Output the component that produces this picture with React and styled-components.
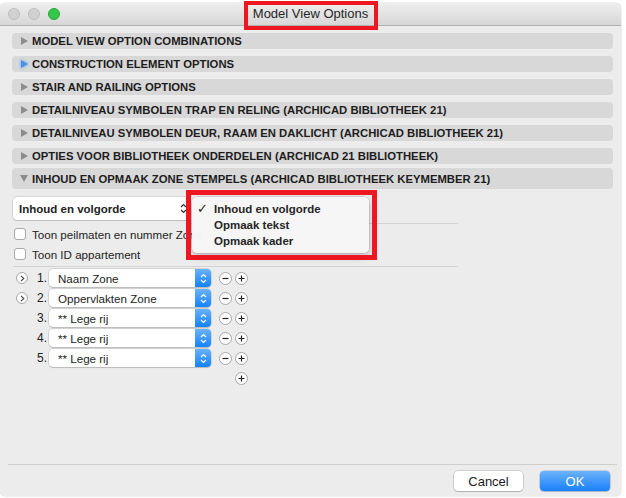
import React from 'react'
import styled, { createGlobalStyle } from 'styled-components'

const GlobalStyle = createGlobalStyle`
  html, body {
    margin: 0;
    padding: 0;
    background: #ffffff;
  }
  body {
    font-family: "Liberation Sans", Arial, sans-serif;
    color: #222;
  }
`

const Page = styled.div`
  width: 626px;
  height: 498px;
  padding-top: 3px;
  box-sizing: border-box;
`

const Window = styled.div`
  width: 621px;
  height: 493px;
  background: #ececec;
  border-radius: 5px;
  display: flex;
  flex-direction: column;
  box-shadow: 0 0 0 0.5px rgba(0, 0, 0, 0.12);
`

const TitleBar = styled.header`
  position: relative;
  flex: none;
  height: 23px;
  box-sizing: border-box;
  display: grid;
  grid-template-columns: 1fr auto 1fr;
  align-items: center;
  padding: 0 8px;
  background: linear-gradient(#eeeeee, #d7d7d7);
  border-bottom: 1px solid #b0b0b0;
  border-radius: 5px 5px 0 0;
`

const Lights = styled.div`
  display: flex;
  gap: 8px;
`

const Light = styled.span`
  width: 12px;
  height: 12px;
  box-sizing: border-box;
  border-radius: 50%;
  background: ${(p) => (p.green ? '#34c84a' : '#d1d1d1')};
  border: 0.5px solid ${(p) => (p.green ? '#27a438' : '#bcbcbc')};
`

const Title = styled.div`
  position: relative;
  font-size: 13px;
  line-height: 16px;
  color: #262626;
`

const Highlight = styled.div`
  position: absolute;
  box-sizing: border-box;
  border: ${(p) => p.weight || 4}px solid #ee1620;
  pointer-events: none;
`

const TitleHighlight = styled(Highlight)`
  left: -9px;
  right: -10px;
  top: -5px;
  bottom: -8px;
`

const Body = styled.main`
  flex: 1;
  display: flex;
  flex-direction: column;
  padding: 7px 8px 0 12px;
`

const Sections = styled.div`
  display: flex;
  flex-direction: column;
  gap: 7px;
`

const SectionHeader = styled.div`
  height: ${(p) => (p.open ? 21 : 16)}px;
  margin-top: ${(p) => (p.open ? -3 : 0)}px;
  width: 601px;
  display: flex;
  align-items: center;
  padding-left: 8px;
  box-sizing: border-box;
  background: #d8d8d8;
  border-radius: 4px;
  font-size: 11.3px;
  font-weight: bold;
  color: #1d1d1d;
  white-space: nowrap;
`

const Arrow = styled.span`
  width: 8px;
  height: 8px;
  margin-right: 4px;
  display: flex;
  align-items: center;
  justify-content: center;
  svg {
    overflow: visible;
    ${(p) => (p.focused ? 'filter: drop-shadow(0 0 1.5px #7db4f3) drop-shadow(0 0 1px #9cc6f6);' : '')}
  }
`

const Panel = styled.section`
  position: relative;
  width: 445px;
  margin: 8px 0 0 1px;
`

const PopupRow = styled.div`
  display: flex;
  align-items: flex-start;
  height: 27px;
`

const Popup = styled.div`
  width: 177px;
  height: 23px;
  box-sizing: border-box;
  display: flex;
  align-items: center;
  justify-content: space-between;
  padding: 0 3px 0 6px;
  background: #fff;
  border-radius: 4px;
  box-shadow: 0 0 0 0.5px rgba(0, 0, 0, 0.18), 0 1px 1px rgba(0, 0, 0, 0.12);
  font-size: 11.5px;
  font-weight: bold;
`

const Rule = styled.div`
  flex: 1;
  align-self: flex-end;
  height: 1px;
  background: #d3d3d3;
`

const CheckRow = styled.label`
  height: 20px;
  display: flex;
  align-items: center;
  gap: 6px;
  padding-left: 1px;
  font-size: 11.6px;
  white-space: nowrap;
`

const Checkbox = styled.span`
  width: 12px;
  height: 12px;
  box-sizing: border-box;
  background: #fff;
  border: 1px solid #a9a9a9;
  border-radius: 3px;
  flex: none;
`

const Divider = styled.div`
  height: 1px;
  background: #d3d3d3;
  margin-top: 2px;
`

const Rows = styled.div`
  padding-top: 1px;
  display: flex;
  flex-direction: column;
`

const Row = styled.div`
  height: 20px;
  display: flex;
  align-items: center;
  padding-left: 3px;
`

const DisclosureSlot = styled.div`
  width: 12px;
  height: 12px;
  flex: none;
`

const RoundButton = styled.span`
  width: ${(p) => p.size || 13}px;
  height: ${(p) => p.size || 13}px;
  box-sizing: border-box;
  border-radius: 50%;
  background: #fff;
  border: 1px solid #a8a8a8;
  display: flex;
  align-items: center;
  justify-content: center;
  flex: none;
`

const Number = styled.span`
  width: 19px;
  text-align: right;
  font-size: 12px;
  margin-right: 2px;
`

const Select = styled.div`
  width: 162px;
  height: 18px;
  display: flex;
  align-items: center;
  background: #fff;
  border-radius: 4px;
  box-shadow: 0 0 0 0.5px rgba(0, 0, 0, 0.2), 0 1px 1px rgba(0, 0, 0, 0.12);
  font-size: 11.6px;
  overflow: hidden;
`

const SelectLabel = styled.span`
  flex: 1;
  padding-left: 9px;
  white-space: nowrap;
`

const Stepper = styled.span`
  width: 16px;
  height: 18px;
  background: linear-gradient(#6ab2fb, #1382fd);
  display: flex;
  align-items: center;
  justify-content: center;
`

const Buttons = styled.div`
  display: flex;
  gap: 3px;
  margin-left: 8px;
`

const AddRow = styled(Row)`
  padding-left: 222px;
`

const Menu = styled.div`
  position: absolute;
  left: 179px;
  top: 0;
  width: 177px;
  height: 56px;
  box-sizing: border-box;
  padding-top: 4px;
  background: rgba(246, 246, 246, 0.98);
  border-radius: 5px;
  box-shadow: 0 0 0 0.5px rgba(0, 0, 0, 0.18), 0 3px 8px rgba(0, 0, 0, 0.22);
`

const MenuItem = styled.div`
  position: relative;
  height: 16px;
  line-height: 16px;
  padding-left: 22px;
  font-size: 11.5px;
  font-weight: bold;
  color: #262626;
`

const Check = styled.span`
  position: absolute;
  left: 5px;
  top: 0;
  font-weight: normal;
  font-size: 13px;
  font-family: "DejaVu Sans", sans-serif;
`

const MenuHighlight = styled(Highlight)`
  left: 173px;
  top: -7px;
  width: 191px;
  height: 70px;
`

const Footer = styled.footer`
  margin: auto -8px 0 -12px;
  display: flex;
  flex-direction: column;
`

const FooterRule = styled.div`
  height: 1px;
  background: #cfcfcf;
  margin: 0 4px 0 8px;
`

const FooterButtons = styled.div`
  display: flex;
  justify-content: flex-end;
  gap: 17px;
  padding: 6px 11px 5px 0;
`

const PushButton = styled.button`
  width: ${(p) => (p.primary ? 70 : 69)}px;
  height: 20px;
  padding: 0;
  border: none;
  border-radius: 4px;
  font-family: "Liberation Sans", Arial, sans-serif;
  font-size: 13px;
  color: ${(p) => (p.primary ? '#fff' : '#222')};
  background: ${(p) => (p.primary ? 'linear-gradient(#6cb3fa, #1a80fb)' : '#fff')};
  box-shadow: ${(p) =>
    p.primary
      ? '0 0 0 0.5px rgba(0, 60, 160, 0.35), 0 1px 1px rgba(0, 0, 0, 0.12)'
      : '0 0 0 0.5px rgba(0, 0, 0, 0.25), 0 1px 1px rgba(0, 0, 0, 0.15)'};
`

const sections = [
  'Model View Option Combinations',
  'Construction Element Options',
  'Stair and Railing Options',
  'Detailniveau symbolen trap en reling (ARCHICAD Bibliotheek 21)',
  'Detailniveau symbolen deur, raam en daklicht (ARCHICAD Bibliotheek 21)',
  'Opties voor bibliotheek onderdelen (ARCHICAD 21 Bibliotheek)',
]

const rows = [
  { label: 'Naam Zone', more: true },
  { label: 'Oppervlakten Zone', more: true },
  { label: '** Lege rij' },
  { label: '** Lege rij' },
  { label: '** Lege rij' },
]

const RightTriangle = ({ color = '#8c8c8c' }) => (
  <svg width="7" height="8" viewBox="0 0 7 8">
    <polygon points="0,0 7,4 0,8" fill={color} />
  </svg>
)

const DownTriangle = () => (
  <svg width="8" height="7" viewBox="0 0 8 7">
    <polygon points="0,0 8,0 4,7" fill="#8c8c8c" />
  </svg>
)

const Chevron = () => (
  <svg width="5" height="7" viewBox="0 0 5 7">
    <path d="M1 0.8 L3.8 3.5 L1 6.2" fill="none" stroke="#444" strokeWidth="1.1" />
  </svg>
)

const Minus = () => (
  <svg width="7" height="7" viewBox="0 0 7 7">
    <path d="M0.5 3.5 H6.5" stroke="#222" strokeWidth="1.2" />
  </svg>
)

const Plus = () => (
  <svg width="7" height="7" viewBox="0 0 7 7">
    <path d="M0.5 3.5 H6.5 M3.5 0.5 V6.5" stroke="#222" strokeWidth="1.2" />
  </svg>
)

const UpDown = ({ color = '#fff' }) => (
  <svg width="7" height="11" viewBox="0 0 7 11">
    <path d="M1 4 L3.5 1.5 L6 4 M1 7 L3.5 9.5 L6 7" fill="none" stroke={color} strokeWidth="1.2" />
  </svg>
)

const App = () => {
  return (
    <Page>
      <GlobalStyle />
      <Window>
        <TitleBar>
          <Lights>
            <Light />
            <Light />
            <Light green />
          </Lights>
          <Title>
            Model View Options
            <TitleHighlight />
          </Title>
          <div />
        </TitleBar>

        <Body>
          <Sections>
            {sections.map((name, i) => (
              <SectionHeader key={name}>
                <Arrow focused={i === 1}>
                  <RightTriangle color={i === 1 ? '#4a90e2' : '#8c8c8c'} />
                </Arrow>
                {name.toUpperCase()}
              </SectionHeader>
            ))}
            <SectionHeader open>
              <Arrow>
                <DownTriangle />
              </Arrow>
              INHOUD EN OPMAAK ZONE STEMPELS (ARCHICAD BIBLIOTHEEK KEYMEMBER 21)
            </SectionHeader>
          </Sections>

          <Panel>
            <PopupRow>
              <Popup>
                Inhoud en volgorde
                <UpDown color="#333" />
              </Popup>
              <Rule />
            </PopupRow>

            <CheckRow>
              <Checkbox />
              Toon peilmaten en nummer Zone
            </CheckRow>
            <CheckRow>
              <Checkbox />
              Toon ID appartement
            </CheckRow>
            <Divider />

            <Rows>
              {rows.map((row, i) => (
                <Row key={i}>
                  <DisclosureSlot>
                    {row.more && (
                      <RoundButton size={12}>
                        <Chevron />
                      </RoundButton>
                    )}
                  </DisclosureSlot>
                  <Number>{i + 1}.</Number>
                  <Select>
                    <SelectLabel>{row.label}</SelectLabel>
                    <Stepper>
                      <UpDown />
                    </Stepper>
                  </Select>
                  <Buttons>
                    <RoundButton>
                      <Minus />
                    </RoundButton>
                    <RoundButton>
                      <Plus />
                    </RoundButton>
                  </Buttons>
                </Row>
              ))}
              <AddRow>
                <RoundButton>
                  <Plus />
                </RoundButton>
              </AddRow>
            </Rows>

            <Menu>
              <MenuItem>
                <Check>✓</Check>
                Inhoud en volgorde
              </MenuItem>
              <MenuItem>Opmaak tekst</MenuItem>
              <MenuItem>Opmaak kader</MenuItem>
            </Menu>
            <MenuHighlight weight={5} />
          </Panel>

          <Footer>
            <FooterRule />
            <FooterButtons>
              <PushButton>Cancel</PushButton>
              <PushButton primary>OK</PushButton>
            </FooterButtons>
          </Footer>
        </Body>
      </Window>
    </Page>
  )
}

export default App
